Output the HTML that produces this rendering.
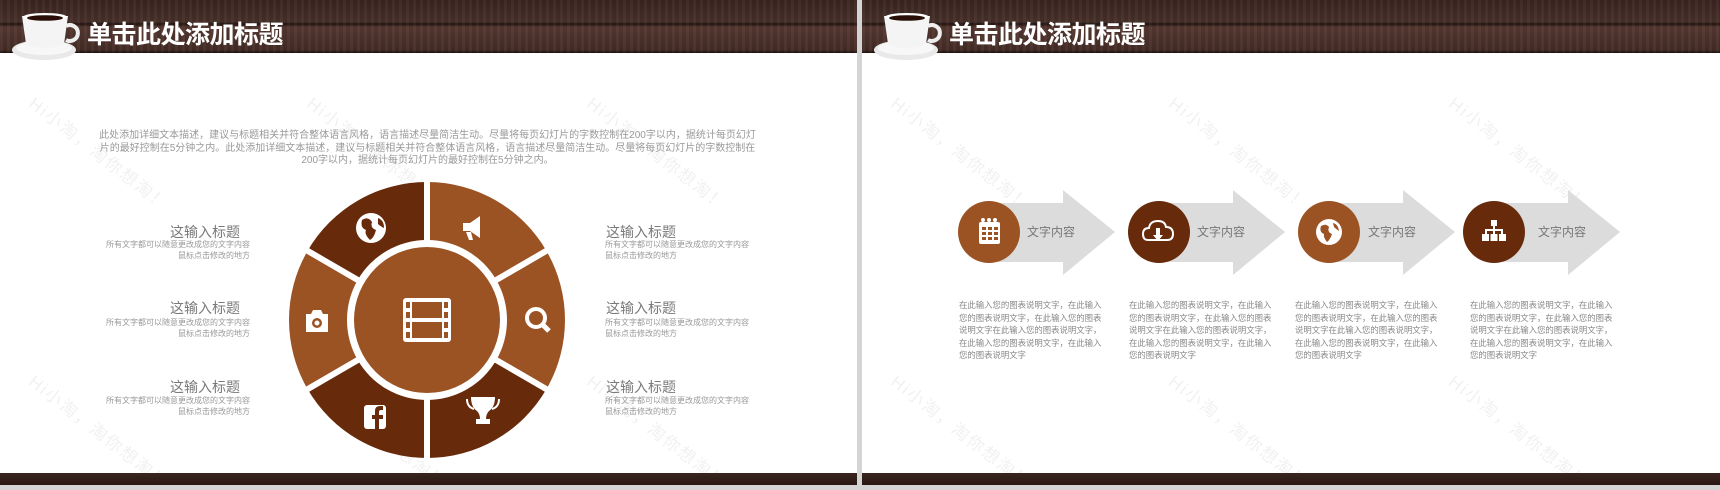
<!DOCTYPE html>
<html><head><meta charset="utf-8"><style>
*{margin:0;padding:0;box-sizing:border-box}
body{width:1720px;height:490px;background:#d4d4d4;position:relative;overflow:hidden;font-family:"Liberation Sans","Noto Sans CJK SC",sans-serif}
.slide{position:absolute;top:0;width:857px;height:485px;background:#fff;overflow:hidden}
.hdr{position:absolute;left:0;top:0;width:100%;height:53px;background:
repeating-linear-gradient(90deg,rgba(255,255,255,0.03) 0 3px,rgba(0,0,0,0.05) 3px 7px),
linear-gradient(180deg,#3a2420 0,#47302a 22px,#231410 24px,#553831 27px,#452c26 50px,#1a0e0b 53px)}
.ftr{position:absolute;left:0;top:473px;width:100%;height:12px;background:linear-gradient(180deg,#3a2520,#2a1814)}
.title{position:absolute;left:87px;top:17px;color:#fff;font-size:25px;font-weight:bold;font-family:"Noto Sans CJK SC",sans-serif;letter-spacing:-0.5px;line-height:32px}
.wm{position:absolute;color:#f1f1f1;font-size:17px;transform:rotate(38deg);transform-origin:0 0;white-space:nowrap;letter-spacing:2px}
.para{position:absolute;left:95px;top:130px;width:665px;text-align:center;color:#999;font-size:10px;line-height:12.5px}
.lt{position:absolute;color:#7a7a7a;font-size:14px;line-height:16px}
.ld{position:absolute;color:#999;font-size:8px;line-height:10.5px}
.r{text-align:right}
.dt{position:absolute;width:150px;color:#888;font-size:8.4px;line-height:12.6px}
.at{position:absolute;color:#777;font-size:12px;line-height:14px}
</style></head><body>

<div class="slide" style="left:0">
<div class="hdr"></div>
<svg style="position:absolute;left:8px;top:10px" width="72" height="52" viewBox="0 0 72 52">
<ellipse cx="36" cy="40" rx="32" ry="10" fill="#e9e9e9"/><ellipse cx="36" cy="38" rx="28" ry="7" fill="#f7f7f7"/>
<path d="M58 16 a8 8 0 1 1 0 14" fill="none" stroke="#eee" stroke-width="4"/>
<path d="M14 6 L60 6 L56 34 Q36 42 18 34 Z" fill="#f4f4f4"/>
<ellipse cx="37" cy="7" rx="22" ry="4" fill="#fff"/><ellipse cx="37" cy="8" rx="18" ry="2.8" fill="#2a0f08"/>
</svg>
<div class="title">单击此处添加标题</div>
<div class="wm" style="left:40px;top:90px">Hi小淘，淘你想淘！</div>
<div class="wm" style="left:318px;top:90px">Hi小淘，淘你想淘！</div>
<div class="wm" style="left:598px;top:90px">Hi小淘，淘你想淘！</div>
<div class="wm" style="left:40px;top:368px">Hi小淘，淘你想淘！</div>
<div class="wm" style="left:318px;top:368px">Hi小淘，淘你想淘！</div>
<div class="wm" style="left:598px;top:368px">Hi小淘，淘你想淘！</div>
<div class="para">此处添加详细文本描述，建议与标题相关并符合整体语言风格，语言描述尽量简洁生动。尽量将每页幻灯片的字数控制在200字以内，据统计每页幻灯片的最好控制在5分钟之内。此处添加详细文本描述，建议与标题相关并符合整体语言风格，语言描述尽量简洁生动。尽量将每页幻灯片的字数控制在200字以内，据统计每页幻灯片的最好控制在5分钟之内。</div>

<svg style="position:absolute;left:0;top:0" width="857" height="485">
<g transform="translate(427,320)">
<path d="M0 -138 A138 138 0 0 1 119.5 -69 L69.3 -40 A80 80 0 0 0 0 -80Z" fill="#9c5324"/>
<path d="M119.5 -69 A138 138 0 0 1 119.5 69 L69.3 40 A80 80 0 0 0 69.3 -40Z" fill="#9c5324"/>
<path d="M119.5 69 A138 138 0 0 1 0 138 L0 80 A80 80 0 0 0 69.3 40Z" fill="#672a0b"/>
<path d="M0 138 A138 138 0 0 1 -119.5 69 L-69.3 40 A80 80 0 0 0 0 80Z" fill="#672a0b"/>
<path d="M-119.5 69 A138 138 0 0 1 -119.5 -69 L-69.3 -40 A80 80 0 0 0 -69.3 40Z" fill="#9c5324"/>
<path d="M-119.5 -69 A138 138 0 0 1 0 -138 L0 -80 A80 80 0 0 0 -69.3 -40Z" fill="#672a0b"/>
<g stroke="#fff" stroke-width="6"><line x1="0" y1="-60" x2="0" y2="-145"/><line x1="0" y1="60" x2="0" y2="145"/>
<line x1="52" y1="-30" x2="126" y2="-73"/><line x1="52" y1="30" x2="126" y2="73"/><line x1="-52" y1="-30" x2="-126" y2="-73"/><line x1="-52" y1="30" x2="-126" y2="73"/></g>
<circle r="79" fill="#fff"/><circle r="73" fill="#9c5324"/>
<g fill="#fff"><rect x="-24" y="-22" width="48" height="44" rx="3"/></g>
<g fill="#9c5324"><rect x="-15" y="-18" width="30" height="16"/><rect x="-15" y="2" width="30" height="16"/>
<rect x="-21" y="-18" width="4" height="6"/><rect x="-21" y="-8" width="4" height="6"/><rect x="-21" y="2" width="4" height="6"/><rect x="-21" y="12" width="4" height="6"/>
<rect x="17" y="-18" width="4" height="6"/><rect x="17" y="-8" width="4" height="6"/><rect x="17" y="2" width="4" height="6"/><rect x="17" y="12" width="4" height="6"/></g>
</g>
<g fill="#fff">
<circle cx="371" cy="228" r="15"/><path d="M362 220 q6 -4 10 2 q-2 6 4 8 q-2 8 -6 10 q-6 -6 -4 -10 q-6 -2 -4 -10z M378 218 q6 2 6 10 q-4 -2 -6 -4z" fill="#672a0b"/>
<path d="M470 223 l10 -7 v22 l-10 -7 h-7 v-8z M466 232 h5 l2 8 h-4z"/>
<circle cx="536" cy="318" r="9" fill="none" stroke="#fff" stroke-width="4"/><line x1="542" y1="324" x2="549" y2="331" stroke="#fff" stroke-width="5"/>
<path d="M471 397 h24 q0 10 -6 14 q-3 3 -3 8 h4 v5 h-14 v-5 h4 q0 -5 -3 -8 q-6 -4 -6 -14z"/>
<path d="M467 399 q0 8 7 10 M499 399 q0 8 -7 10" fill="none" stroke="#fff" stroke-width="2"/>
<rect x="364" y="405" width="22" height="24" rx="3"/><path d="M379 429 v-10 h4 v-4 h-4 v-3 q0 -2 2 -2 h2 v-4 h-3 q-5 0 -5 5 v4 h-3 v4 h3 v10z" fill="#672a0b"/>
<path d="M306 314 h5 l2 -4 h8 l2 4 h5 v18 h-22z"/><circle cx="317" cy="323" r="5" fill="#9c5324"/><circle cx="317" cy="323" r="2.5"/>
</g>
</svg>

<div class="lt r" style="left:120px;top:224px;width:120px">这输入标题</div>
<div class="ld r" style="left:70px;top:240px;width:180px">所有文字都可以随意更改成您的文字内容<br>鼠标点击修改的地方</div>
<div class="lt r" style="left:120px;top:300px;width:120px">这输入标题</div>
<div class="ld r" style="left:70px;top:318px;width:180px">所有文字都可以随意更改成您的文字内容<br>鼠标点击修改的地方</div>
<div class="lt r" style="left:120px;top:379px;width:120px">这输入标题</div>
<div class="ld r" style="left:70px;top:396px;width:180px">所有文字都可以随意更改成您的文字内容<br>鼠标点击修改的地方</div>
<div class="lt" style="left:606px;top:224px">这输入标题</div>
<div class="ld" style="left:605px;top:240px">所有文字都可以随意更改成您的文字内容<br>鼠标点击修改的地方</div>
<div class="lt" style="left:606px;top:300px">这输入标题</div>
<div class="ld" style="left:605px;top:318px">所有文字都可以随意更改成您的文字内容<br>鼠标点击修改的地方</div>
<div class="lt" style="left:606px;top:379px">这输入标题</div>
<div class="ld" style="left:605px;top:396px">所有文字都可以随意更改成您的文字内容<br>鼠标点击修改的地方</div>
<div class="ftr"></div>
</div>

<div class="slide" style="left:862px;width:858px">
<div class="hdr"></div>
<svg style="position:absolute;left:8px;top:10px" width="72" height="52" viewBox="0 0 72 52">
<ellipse cx="36" cy="40" rx="32" ry="10" fill="#e9e9e9"/><ellipse cx="36" cy="38" rx="28" ry="7" fill="#f7f7f7"/>
<path d="M58 16 a8 8 0 1 1 0 14" fill="none" stroke="#eee" stroke-width="4"/>
<path d="M14 6 L60 6 L56 34 Q36 42 18 34 Z" fill="#f4f4f4"/>
<ellipse cx="37" cy="7" rx="22" ry="4" fill="#fff"/><ellipse cx="37" cy="8" rx="18" ry="2.8" fill="#2a0f08"/>
</svg>
<div class="title">单击此处添加标题</div>
<div class="wm" style="left:40px;top:90px">Hi小淘，淘你想淘！</div>
<div class="wm" style="left:318px;top:90px">Hi小淘，淘你想淘！</div>
<div class="wm" style="left:598px;top:90px">Hi小淘，淘你想淘！</div>
<div class="wm" style="left:40px;top:368px">Hi小淘，淘你想淘！</div>
<div class="wm" style="left:318px;top:368px">Hi小淘，淘你想淘！</div>
<div class="wm" style="left:598px;top:368px">Hi小淘，淘你想淘！</div>
<svg style="position:absolute;left:0;top:0" width="858" height="485">
<g fill="#dcdcdc">
<path d="M127 203 H201 V190 L253 232 L201 275 V262 H127Z"/>
<path d="M297 203 H371 V190 L423 232 L371 275 V262 H297Z"/>
<path d="M467 203 H541 V190 L593 232 L541 275 V262 H467Z"/>
<path d="M632 203 H706 V190 L758 232 L706 275 V262 H632Z"/>
</g>
<circle cx="127" cy="232" r="31" fill="#9c5324"/>
<circle cx="297" cy="232" r="31" fill="#672a0b"/>
<circle cx="467" cy="232" r="31" fill="#9c5324"/>
<circle cx="632" cy="232" r="31" fill="#672a0b"/>
<g fill="#fff">
<rect x="117" y="222" width="21" height="22" rx="2"/>
<g fill="#9c5324"><rect x="120" y="227" width="4" height="3"/><rect x="126" y="227" width="4" height="3"/><rect x="132" y="227" width="4" height="3"/><rect x="120" y="232" width="4" height="3"/><rect x="126" y="232" width="4" height="3"/><rect x="132" y="232" width="4" height="3"/><rect x="120" y="237" width="4" height="3"/><rect x="126" y="237" width="4" height="3"/><rect x="132" y="237" width="4" height="3"/></g>
<circle cx="121" cy="220" r="2"/><circle cx="127" cy="220" r="2"/><circle cx="133" cy="220" r="2"/>
<path d="M286 240 q-5 0 -5 -6 q0 -6 6 -6 q1 -7 9 -7 q7 0 8 6 q7 0 7 7 q0 6 -6 6z" fill="none" stroke="#fff" stroke-width="2"/>
<path d="M294 228 h4 v7 h3 l-5 6 l-5 -6 h3z"/>
<circle cx="467" cy="232" r="13"/><path d="M459 226 q5 -3 8 1 q-2 5 3 7 q-2 6 -5 8 q-4 -5 -3 -8 q-5 -2 -3 -8z M471 223 q5 1 6 8 q-3 -2 -5 -4z" fill="#9c5324"/>
<rect x="629" y="220" width="6" height="6"/><rect x="631" y="226" width="2" height="4"/><rect x="623" y="229" width="18" height="2"/>
<rect x="623" y="229" width="2" height="5"/><rect x="631" y="229" width="2" height="5"/><rect x="639" y="229" width="2" height="5"/>
<rect x="620" y="234" width="7" height="7"/><rect x="628.5" y="234" width="7" height="7"/><rect x="637" y="234" width="7" height="7"/>
</g>
</svg>
<div class="at" style="left:165px;top:225px">文字内容</div>
<div class="at" style="left:335px;top:225px">文字内容</div>
<div class="at" style="left:506px;top:225px">文字内容</div>
<div class="at" style="left:676px;top:225px">文字内容</div>
<div class="dt" style="left:97px;top:299px">在此输入您的图表说明文字，在此输入您的图表说明文字，在此输入您的图表说明文字在此输入您的图表说明文字，在此输入您的图表说明文字，在此输入您的图表说明文字</div>
<div class="dt" style="left:267px;top:299px">在此输入您的图表说明文字，在此输入您的图表说明文字，在此输入您的图表说明文字在此输入您的图表说明文字，在此输入您的图表说明文字，在此输入您的图表说明文字</div>
<div class="dt" style="left:433px;top:299px">在此输入您的图表说明文字，在此输入您的图表说明文字，在此输入您的图表说明文字在此输入您的图表说明文字，在此输入您的图表说明文字，在此输入您的图表说明文字</div>
<div class="dt" style="left:608px;top:299px">在此输入您的图表说明文字，在此输入您的图表说明文字，在此输入您的图表说明文字在此输入您的图表说明文字，在此输入您的图表说明文字，在此输入您的图表说明文字</div>
<div class="ftr"></div>
</div>
</body></html>
